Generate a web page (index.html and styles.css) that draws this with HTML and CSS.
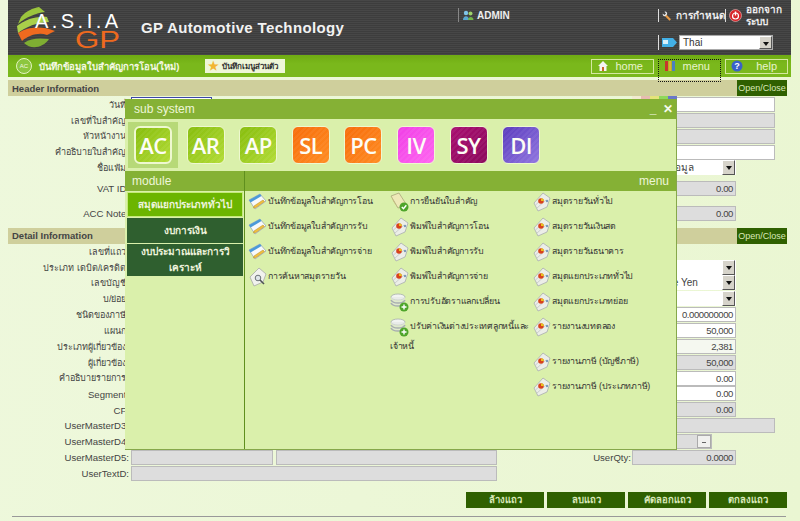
FILE: index.html
```html
<!DOCTYPE html>
<html lang="th">
<head>
    <meta charset="UTF-8">
    <title>GP Automotive Technology</title>
    <link rel="stylesheet" href="styles.css">
</head>
<body>

    <svg class="icon-defs" width="0" height="0">
        <symbol id="i-note" viewBox="0 0 20 20">
            <path d="M1 8 L12 2 L18 9 L7 17 Z" fill="#f7f9fb" stroke="#9aa7b5" stroke-width=".8"/>
            <path d="M1 8 L12 2 L13.5 4 L2.5 10.5 Z" fill="#4b9ad8"/>
            <path d="M6 14 L15 8 L16.5 9.500 L8 15.500 L5.500 16 Z" fill="#f0c040" stroke="#b98a20" stroke-width=".5"/>
        </symbol>
        <symbol id="i-report" viewBox="0 0 20 20">
            <path d="M2 11 L11 1 L18 6 L15 15 L6 19 Z" fill="#eceee8" stroke="#a9adb0" stroke-width=".8"/>
            <path d="M5 16 L14 8 M3.500 13 L9 8" stroke="#c3c7c6" stroke-width=".8"/>
            <circle cx="9" cy="9" r="2.800" fill="#d8431c"/>
            <path d="M9 6.200 A2.800 2.800 0 0 1 11.800 9 L9 9 Z" fill="#e9c21f"/>
            <circle cx="15" cy="9" r="1.200" fill="#7d9bb8"/>
        </symbol>
        <symbol id="i-book" viewBox="0 0 20 20">
            <path d="M1 4 L9 1 L16 12 L8 16 Z" fill="#eee9b8" stroke="#aaa67a" stroke-width=".8"/>
            <path d="M1 4 L8 16 L9 18 L3 9 Z" fill="#c6bd7e"/>
            <circle cx="14" cy="15" r="4.500" fill="#4ea52a"/>
            <path d="M11.800 15 L13.500 16.800 L16.300 13.300" fill="none" stroke="#fff" stroke-width="1.400"/>
        </symbol>
        <symbol id="i-db" viewBox="0 0 20 20">
            <ellipse cx="8" cy="5" rx="7" ry="3" fill="#f2f4f2" stroke="#a8aeb0" stroke-width=".8"/>
            <path d="M1 5 V11 C3 15 13 15 15 11 V5" fill="#e3e6e3" fill-opacity=".6"/>
            <path d="M1 8 C3 12 13 12 15 8 M1 11 C3 15 13 15 15 11" fill="none" stroke="#a8aeb0" stroke-width="1.600"/>
            <circle cx="14" cy="15" r="4.500" fill="#4ea52a"/>
            <path d="M11.500 15 H16.500 M14 12.500 V17.500" stroke="#fff" stroke-width="1.400"/>
        </symbol>
        <symbol id="i-search" viewBox="0 0 20 20">
            <path d="M2 10 L11 1 L18 7 L15 15 L6 19 Z" fill="#f1f2ee" stroke="#a7aaa8" stroke-width=".8"/>
            <circle cx="10" cy="11" r="2.800" fill="#dfe6ea" stroke="#6c7378" stroke-width="1"/>
            <path d="M12 13 L16 17" stroke="#4d5256" stroke-width="1.600"/>
        </symbol>
    </svg>

    <div class="page">
        <div class="top-header">
            <div class="brand">
                <svg class="logo" width="112" height="50" viewBox="0 0 112 50">
                    <path d="M8 14 C13 8 20 5 26 4 L32 9 C22 10 12 15 5 21 Z" fill="#9bc53d"/>
                    <path d="M4 23 C12 17 22 13 34 14 L36 19 C24 19 13 24 5 30 Z" fill="#a9d04a"/>
                    <path d="M5 30 C14 24 28 22 42 28 L34 32 C26 29 16 32 9 38 Z" fill="#ee6a1f"/>
                    <path d="M11 40 C18 35 26 35 36 36 C30 45 18 47 11 40 Z" fill="#7fae32"/>
                    <text x="22" y="25" class="logo-asia" textLength="83" lengthAdjust="spacing">A.S.I.A</text>
                    <text x="62" y="45" class="logo-gp" textLength="45" lengthAdjust="spacingAndGlyphs">GP</text>
                </svg>
                <span class="brand-title">GP Automotive Technology</span>
            </div>
            <div class="user-box">
                <svg width="12" height="12" viewBox="0 0 12 12"><circle cx="4" cy="4" r="2.200" fill="#7fc4e8"/><path d="M1 11 C1 6 7 6 7 11 Z" fill="#5aa7d0"/><circle cx="8.500" cy="4.500" r="2" fill="#9ed36a"/><path d="M6 11 C6 7 11.500 7 11.500 11 Z" fill="#72b548"/></svg>
                <span>ADMIN</span>
            </div>
            <div class="tools">
                <div class="tools-row">
                    <div class="tool tool-setting">
                        <svg width="14" height="14" viewBox="0 0 14 14"><path d="M5 6 L11.500 12.500" stroke="#e89a44" stroke-width="3"/><path d="M1 3.500 L3.500 5.500 L5.500 3.500 L3.500 1 C6 0 8 2.500 7 5 L5 7 C2.500 8 .5 6 1 3.500 Z" fill="#e6e6e6"/></svg>
                        <span>การกำหนด</span>
                    </div>
                    <div class="tool tool-exit">
                        <svg width="13" height="13" viewBox="0 0 13 13"><circle cx="6.500" cy="6.500" r="6" fill="#d8262a" stroke="#f2c6c6" stroke-width=".6"/><circle cx="6.500" cy="7" r="3" fill="none" stroke="#fff" stroke-width="1.200"/><path d="M6.500 2.500 V6.500" stroke="#fff" stroke-width="1.400"/></svg>
                        <span>ออกจาก<br>ระบบ</span>
                    </div>
                </div>
                <div class="tool tool-lang">
                    <svg width="15" height="11" viewBox="0 0 15 11"><path d="M0 1 H11 L15 5.500 L11 10 H0 Z" fill="#43b0e6"/><rect x="1" y="3" width="5" height="4" fill="#d8f0fb"/></svg>
                    <div class="lang-select">Thai<span class="drop-btn"></span></div>
                </div>
            </div>
        </div>

        <div class="title-bar">
            <span class="ac-badge">AC</span>
            <span class="screen-title">บันทึกข้อมูลใบสำคัญการโอน(ใหม่)</span>
            <span class="bookmark"><span class="star">★</span>บันทึกเมนูส่วนตัว</span>
            <div class="nav-buttons">
                <a class="nav-btn"><svg width="12" height="12" viewBox="0 0 12 12"><path d="M6 1 L11 6 H9.500 V11 H2.500 V6 H1 Z" fill="#f4f4f4"/><path d="M5 7 H7 V11 H5 Z" fill="#c9662a"/></svg><span>home</span></a>
                <a class="nav-btn nav-btn-focus"><svg width="12" height="12" viewBox="0 0 12 12"><rect x="1" y="1" width="3" height="10" fill="#c8352b"/><rect x="4.500" y="1" width="3" height="10" fill="#e0b030"/><rect x="8" y="1" width="3" height="10" fill="#4a7fc0"/></svg><span>menu</span></a>
                <a class="nav-btn"><svg width="12" height="12" viewBox="0 0 12 12"><circle cx="6" cy="6" r="5.500" fill="#3a62c8"/><text x="6" y="9" class="help-mark">?</text></svg><span>help</span></a>
            </div>
        </div>

        <div class="section-bar">
            <span>Header Information</span>
            <a class="open-close">Open/Close</a>
        </div>

        <div class="form-grid form-head">
            <label>วันที่:</label><div class="field field-date"></div><div></div><div class="field"><div class="swatches"><i class="sw1"></i><i class="sw2"></i><i class="sw3"></i><i class="sw4"></i><i class="sw5"></i></div></div>
            <label>เลขที่ใบสำคัญ:</label><div></div><div></div><div class="field field-off"></div>
            <label>หัวหน้างาน:</label><div></div><div></div><div class="field field-off"></div>
            <label>คำอธิบายใบสำคัญ:</label><div></div><div></div><div class="field"></div>
            <label>ชื่อแฟ้ม:</label><div></div><div></div><div class="select short">ชื่อแฟ้มข้อมูล<span class="drop-btn"></span></div>
            <label class="lbl-en">VAT ID:</label><div></div><div></div><div class="field field-off num short">0.00</div>
            <label class="lbl-en">ACC Note:</label><div></div><div></div><div class="field field-off num short">0.00</div>
        </div>

        <div class="section-bar section-detail">
            <span>Detail Information</span>
            <a class="open-close">Open/Close</a>
        </div>

        <div class="form-grid form-detail">
            <label>เลขที่แถว:</label><div></div><div></div><div></div>
            <label>ประเภท เดบิต/เครดิต:</label><div></div><div></div><div class="select short"><span class="drop-btn"></span></div>
            <label>เลขบัญชี:</label><div></div><div></div><div class="select short">Japanese Yen<span class="drop-btn"></span></div>
            <label>บ/ย่อย:</label><div></div><div></div><div class="select short"><span class="drop-btn"></span></div>
            <label>ชนิดของภาษี:</label><div></div><div></div><div class="field num short">0.000000000</div>
            <label>แผนก:</label><div></div><div></div><div class="field num short">50,000</div>
            <label>ประเภทผู้เกี่ยวข้อง:</label><div></div><div></div><div class="field field-pale num short">2,381</div>
            <label>ผู้เกี่ยวข้อง:</label><div></div><div></div><div class="field field-off num short">50,000</div>
            <label>คำอธิบายรายการ:</label><div></div><div></div><div class="field num short">0.00</div>
            <label class="lbl-en">Segment:</label><div></div><div></div><div class="field num short">0.00</div>
            <label class="lbl-en">CF:</label><div></div><div></div><div class="field field-off num short">0.00</div>
            <label class="lbl-en">UserMasterD3:</label><div></div><div></div><div class="field field-off"></div>
            <label class="lbl-en">UserMasterD4:</label><div></div><div></div><div class="field field-off combo"><span class="combo-btn"></span></div>
            <label class="lbl-en">UserMasterD5:</label>
            <div class="pair"><div class="field field-off"></div><div class="field field-off"></div></div>
            <label class="lbl-en label-qty">UserQty:</label><div class="field field-off num short">0.0000</div>
            <label class="lbl-en">UserTextD:</label><div class="field field-off"></div><div></div><div></div>
        </div>

        <div class="actions">
            <a class="action-btn">ล้างแถว</a>
            <a class="action-btn">ลบแถว</a>
            <a class="action-btn">คัดลอกแถว</a>
            <a class="action-btn">ตกลงแถว</a>
        </div>
        <hr class="bottom-line">
    </div>

    <!-- เมนูหลัก -->
    <div class="menu-window">
        <div class="win-title">
            <span>sub system</span>
            <span class="win-controls">_ &nbsp;✕</span>
        </div>
        <div class="sys-row">
            <div class="sys-cell sys-active"><span class="sys-icon sys-green">AC</span></div>
            <div class="sys-cell"><span class="sys-icon sys-green">AR</span></div>
            <div class="sys-cell"><span class="sys-icon sys-green">AP</span></div>
            <div class="sys-cell"><span class="sys-icon sys-orange">SL</span></div>
            <div class="sys-cell"><span class="sys-icon sys-orange">PC</span></div>
            <div class="sys-cell"><span class="sys-icon sys-pink">IV</span></div>
            <div class="sys-cell"><span class="sys-icon sys-wine">SY</span></div>
            <div class="sys-cell"><span class="sys-icon sys-purple">DI</span></div>
        </div>
        <div class="win-split-head">
            <span>module</span>
            <span>menu</span>
        </div>
        <div class="win-body">
            <div class="module-list">
                <a class="module-btn module-active">สมุดแยกประเภททั่วไป</a>
                <a class="module-btn">งบการเงิน</a>
                <a class="module-btn module-tall">งบประมาณและการวิ<br>เคราะห์</a>
            </div>
            <div class="menu-list">
                <a class="menu-item"><svg><use href="#i-note"/></svg>บันทึกข้อมูลใบสำคัญการโอน</a>
                <a class="menu-item"><svg><use href="#i-book"/></svg>การยืนยันใบสำคัญ</a>
                <a class="menu-item"><svg><use href="#i-report"/></svg>สมุดรายวันทั่วไป</a>

                <a class="menu-item"><svg><use href="#i-note"/></svg>บันทึกข้อมูลใบสำคัญการรับ</a>
                <a class="menu-item"><svg><use href="#i-report"/></svg>พิมพ์ใบสำคัญการโอน</a>
                <a class="menu-item"><svg><use href="#i-report"/></svg>สมุดรายวันเงินสด</a>

                <a class="menu-item"><svg><use href="#i-note"/></svg>บันทึกข้อมูลใบสำคัญการจ่าย</a>
                <a class="menu-item"><svg><use href="#i-report"/></svg>พิมพ์ใบสำคัญการรับ</a>
                <a class="menu-item"><svg><use href="#i-report"/></svg>สมุดรายวันธนาคาร</a>

                <a class="menu-item"><svg><use href="#i-search"/></svg>การค้นหาสมุดรายวัน</a>
                <a class="menu-item"><svg><use href="#i-report"/></svg>พิมพ์ใบสำคัญการจ่าย</a>
                <a class="menu-item"><svg><use href="#i-report"/></svg>สมุดแยกประเภททั่วไป</a>

                <span></span>
                <a class="menu-item"><svg><use href="#i-db"/></svg>การปรับอัตราแลกเปลี่ยน</a>
                <a class="menu-item"><svg><use href="#i-report"/></svg>สมุดแยกประเภทย่อย</a>

                <span></span>
                <a class="menu-item"><svg><use href="#i-db"/></svg>ปรับค่าเงินต่างประเทศลูกหนี้และ<br>เจ้าหนี้</a>
                <a class="menu-item"><svg><use href="#i-report"/></svg>รายงานงบทดลอง</a>

                <span></span>
                <span></span>
                <a class="menu-item"><svg><use href="#i-report"/></svg>รายงานภาษี (บัญชีภาษี)</a>

                <span></span>
                <span></span>
                <a class="menu-item"><svg><use href="#i-report"/></svg>รายงานภาษี (ประเภทภาษี)</a>
            </div>
        </div>
    </div>

</body>
</html>
```

FILE: styles.css
```css
/* พื้นฐานของหน้า */
body {
    margin: 0;
    height: 521px;
    overflow: hidden;
    font-family: "Liberation Sans", Tahoma, sans-serif;
    font-size: 11px;
    color: #333;
    background: linear-gradient(100deg, #eef8dc 0%, #eaf6d2 100%);
}

.icon-defs {
    position: absolute;
}

.page {
    width: 783px;
    margin-left: 8px;
}

/* ส่วนหัว */
.top-header {
    display: flex;
    height: 55px;
    background: repeating-linear-gradient(#474747 0, #474747 1px, #3d3d3d 1px, #3d3d3d 2px);
    color: #eee;
}

.brand {
    flex: 1;
    display: flex;
    align-items: center;
}

.logo {
    align-self: flex-start;
    margin-left: 5px;
    margin-top: 3px;
}

.logo-asia {
    font-size: 20px;
    fill: #fff;
}

.logo-gp {
    font-size: 23px;
    fill: #ee6a1f;
}

.brand-title {
    margin-left: 16px;
    font-size: 15px;
    font-weight: bold;
    letter-spacing: .35px;
    color: #f2f2f2;
}

.user-box {
    width: 200px;
    box-sizing: border-box;
    display: flex;
    align-items: center;
    align-self: flex-start;
    gap: 3px;
    height: 14px;
    margin-top: 8px;
    padding-left: 3px;
    border-left: 1px solid #888;
    font-size: 10px;
    font-weight: bold;
}

.tools {
    width: 133px;
}

.tools-row {
    display: flex;
    height: 30px;
}

.tool {
    display: flex;
    align-items: center;
    gap: 4px;
    border-left: 1px solid #ddd;
    font-weight: bold;
    font-size: 10px;
    line-height: 12px;
}

.tool-setting {
    width: 67px;
    box-sizing: border-box;
    height: 13px;
    margin-top: 9px;
    padding-left: 3px;
    white-space: nowrap;
}

.tool-exit {
    flex: 1;
    padding-left: 3px;
    height: 13px;
    margin-top: 9px;
    white-space: nowrap;
}

.tool-lang {
    height: 15px;
    margin-top: 5px;
    padding-left: 3px;
    gap: 2px;
}

.lang-select {
    position: relative;
    width: 94px;
    height: 15px;
    box-sizing: border-box;
    padding-left: 3px;
    background: #fff;
    border: 1px solid #aaa;
    color: #333;
    font-weight: normal;
    font-size: 10px;
    line-height: 13px;
}

/* ปุ่มลูกศรของ select */
.drop-btn {
    position: absolute;
    right: 0;
    top: 0;
    bottom: 0;
    width: 13px;
    box-sizing: border-box;
    background: #d6d3ca;
    border: 1px solid;
    border-color: #fff #555 #555 #fff;
}

.drop-btn::after {
    content: "";
    position: absolute;
    left: 3px;
    top: 5px;
    border: 3px solid transparent;
    border-top: 4px solid #111;
    border-bottom: 0;
}

/* แถบชื่อหน้าจอ */
.title-bar {
    display: flex;
    align-items: center;
    height: 22px;
    background: linear-gradient(#6fab12, #7ab81c 40%);
    color: #f4f8e4;
}

.ac-badge {
    width: 14px;
    height: 14px;
    margin-left: 8px;
    border: 1px solid #e3f3bf;
    border-radius: 50%;
    background: #8cc63f;
    font-size: 6px;
    line-height: 14px;
    text-align: center;
}

.screen-title {
    margin-left: 7px;
    width: 166px;
    font-size: 9.500px;
    font-weight: bold;
    white-space: nowrap;
}

.bookmark {
    display: flex;
    align-items: center;
    gap: 3px;
    width: 80px;
    height: 14px;
    padding-left: 3px;
    box-sizing: border-box;
    background: #eef6d8;
    color: #333;
    font-size: 8px;
    font-weight: bold;
    white-space: nowrap;
}

.star {
    color: #f2b632;
    font-size: 12px;
}

.nav-buttons {
    display: flex;
    gap: 4px;
    margin-left: auto;
    margin-right: 3px;
}

.nav-btn {
    display: flex;
    align-items: center;
    justify-content: space-between;
    position: relative;
    width: 63px;
    height: 15px;
    padding: 0 10px 0 5px;
    box-sizing: border-box;
    border: 1px solid #d4e8a0;
    font-size: 11px;
    color: #e9f4cc;
}

.nav-btn-focus {
    border-color: transparent;
}

.nav-btn-focus::after {
    content: "";
    position: absolute;
    left: -1px;
    right: -1px;
    top: -1px;
    height: 23px;
    border: 1px dotted #111;
    box-sizing: border-box;
}

/* แถบหัวข้อ */
.section-bar {
    display: flex;
    align-items: center;
    justify-content: space-between;
    width: 779px;
    height: 16px;
    margin-top: 3px;
    background: #cfcf9c;
    font-size: 9.500px;
    font-weight: bold;
    color: #444;
    box-sizing: border-box;
    padding-left: 4px;
}

.section-detail {
    margin-top: 2px;
}

.open-close {
    width: 50px;
    height: 16px;
    background: #2f6000;
    color: #d9e8b8;
    font-size: 9px;
    font-weight: normal;
    line-height: 16px;
    text-align: center;
}

/* ฟอร์ม */
.form-grid {
    display: grid;
    grid-template-columns: 120px 366px 129px 143px;
    column-gap: 3px;
    width: 775px;
}

.form-grid label {
    align-self: center;
    margin-right: -1px;
    text-align: right;
    white-space: nowrap;
    font-size: 9px;
    color: #444;
}

.form-grid .lbl-en {
    font-size: 9.600px;
}

.form-grid .label-qty {
    margin-right: -2px;
}

.form-head {
    margin-top: 1px;
    grid-template-rows: repeat(5, 15.750px) 26px 24px;
    align-items: center;
}

.form-detail {
    grid-auto-rows: 15.850px;
}

.field {
    position: relative;
    height: 15px;
    box-sizing: border-box;
    background: #fff;
    border: 1px solid #bbb;
    padding: 0 2px;
    line-height: 13px;
    font-size: 9.500px;
    letter-spacing: -.4px;
    color: #444;
}

.field-off {
    background: #dddddd;
}

.field-pale {
    background: #f5f8f0;
}

.field-date {
    width: 81px;
    border-color: #3c46a8;
}

.num {
    text-align: right;
}

.short {
    width: 104px;
}

.select {
    position: relative;
    height: 15px;
    box-sizing: border-box;
    background: #fff;
    line-height: 15px;
    padding-left: 3px;
    overflow: hidden;
    white-space: nowrap;
    font-size: 10px;
    color: #444;
}

.select .drop-btn {
    right: 1px;
}

.select.short {
    width: 104px;
}

/* แถบสีเล็ก ๆ ที่โผล่เหนือหน้าต่างเมนู */
.swatches {
    position: absolute;
    left: -1px;
    top: -2px;
    display: flex;
    height: 3px;
}

.swatches i {
    width: 9px;
    height: 3px;
}

.sw1 { background: #f1ead0; }
.sw2 { background: #e6bcb0; }
.sw3 { background: #e4e47a; }
.sw4 { background: #8fd85a; }
.sw5 { background: #6a78c8; }

.combo {
    width: 80px;
}

.combo-btn {
    position: absolute;
    right: 0;
    top: 0;
    width: 14px;
    height: 13px;
    box-sizing: border-box;
    background: #f0f0ee;
    border: 1px solid #aaa;
}

.combo-btn::after {
    content: "";
    position: absolute;
    left: 4px;
    top: 6px;
    width: 4px;
    height: 1px;
    background: #666;
}

.pair {
    display: grid;
    grid-template-columns: 142px 1fr;
    column-gap: 3px;
}

/* ปุ่มด้านล่าง */
.actions {
    display: flex;
    justify-content: flex-end;
    gap: 3px;
    width: 779px;
    margin-top: 11px;
}

.action-btn {
    width: 78px;
    height: 16px;
    background: #2f6000;
    color: #d9e8b8;
    font-size: 9.500px;
    font-weight: bold;
    line-height: 16px;
    text-align: center;
}

.bottom-line {
    width: 774px;
    margin: 8px 0 0 4px;
    border: 0;
    border-top: 1px solid #999;
}

/* หน้าต่างเมนู */
.menu-window {
    position: absolute;
    left: 125px;
    top: 99px;
    width: 552px;
    height: 351px;
    display: flex;
    flex-direction: column;
    box-sizing: border-box;
    background: #daf0ab;
    border-right: 1px solid #86a84a;
    border-bottom: 1px solid #86a84a;
}

.win-title {
    display: flex;
    justify-content: space-between;
    align-items: center;
    height: 20px;
    padding: 0 3px 0 9px;
    background: #85b135;
    color: #eef6d8;
    font-size: 12px;
}

.win-controls {
    font-size: 12px;
    font-weight: bold;
    color: #f6faea;
}

.sys-row {
    display: flex;
    height: 52px;
    padding: 3px 0 0 3px;
    box-sizing: border-box;
}

.sys-cell {
    width: 50px;
    height: 46px;
    margin-right: 2.600px;
    display: flex;
    align-items: center;
    justify-content: center;
}

.sys-active {
    background: #b7d978;
}

.sys-active .sys-icon {
    border-width: 2px;
    line-height: 34px;
}

.sys-icon {
    width: 38px;
    height: 38px;
    box-sizing: border-box;
    border: 1px solid #eef8d0;
    border-radius: 6px;
    color: #fdfdf5;
    font-family: "Open Sans", "Liberation Sans", sans-serif;
    font-size: 22px;
    font-weight: 600;
    line-height: 36px;
    letter-spacing: -.5px;
    text-align: center;
}

/* ลายเฉียงจาง ๆ บนไอคอนระบบ */
.sys-green { background: repeating-linear-gradient(135deg, rgba(255,255,255,.05) 0 2px, transparent 2px 4px), linear-gradient(135deg, #86bd0c, #b3dc36); }
.sys-orange { background: repeating-linear-gradient(135deg, rgba(255,255,255,.05) 0 2px, transparent 2px 4px), linear-gradient(135deg, #f76c0a, #ff8c22); }
.sys-pink { background: repeating-linear-gradient(135deg, rgba(255,255,255,.05) 0 2px, transparent 2px 4px), linear-gradient(135deg, #f03ee6, #ff66f0); }
.sys-wine { background: repeating-linear-gradient(135deg, rgba(255,255,255,.05) 0 2px, transparent 2px 4px), linear-gradient(135deg, #a80e70, #8c0a5c); }
.sys-purple { background: repeating-linear-gradient(135deg, rgba(255,255,255,.05) 0 2px, transparent 2px 4px), linear-gradient(135deg, #5a3bbd, #9176e0); }

.win-split-head {
    display: flex;
    justify-content: space-between;
    align-items: center;
    height: 20px;
    padding: 0 7px;
    background: linear-gradient(90deg, #85b135 119px, #5f8f1e 119px, #5f8f1e 120px, #85b135 120px);
    color: #eef6d8;
    font-size: 12px;
}

.win-body {
    flex: 1;
    display: flex;
}

.module-list {
    width: 120px;
    box-sizing: border-box;
    padding: 1px 0 0 2px;
    border-right: 1px solid #5f8f1e;
}

.module-btn {
    display: flex;
    align-items: center;
    justify-content: center;
    width: 116px;
    height: 25px;
    box-sizing: border-box;
    margin-bottom: 1px;
    padding: 0 2px;
    background: #2f5f2f;
    color: #eef3dc;
    font-size: 10px;
    font-weight: bold;
    line-height: 16px;
    text-align: center;
}

.module-tall {
    height: 32px;
}

.module-active {
    background: #6cb500;
    border: 1px solid #c5ea7a;
}

.menu-list {
    flex: 1;
    display: grid;
    grid-template-columns: repeat(3, 142px);
    grid-template-rows: repeat(5, 25px) 35px 25px 25px;
    padding: 1px 0 0 3px;
}

.menu-item {
    display: block;
    font-size: 8.800px;
    letter-spacing: -.25px;
    line-height: 18px;
    white-space: nowrap;
    color: #333;
}

.menu-item svg {
    width: 20px;
    height: 20px;
    vertical-align: middle;
}

.help-mark {
    fill: #fff;
    font-size: 9px;
    font-weight: bold;
    text-anchor: middle;
}
```
